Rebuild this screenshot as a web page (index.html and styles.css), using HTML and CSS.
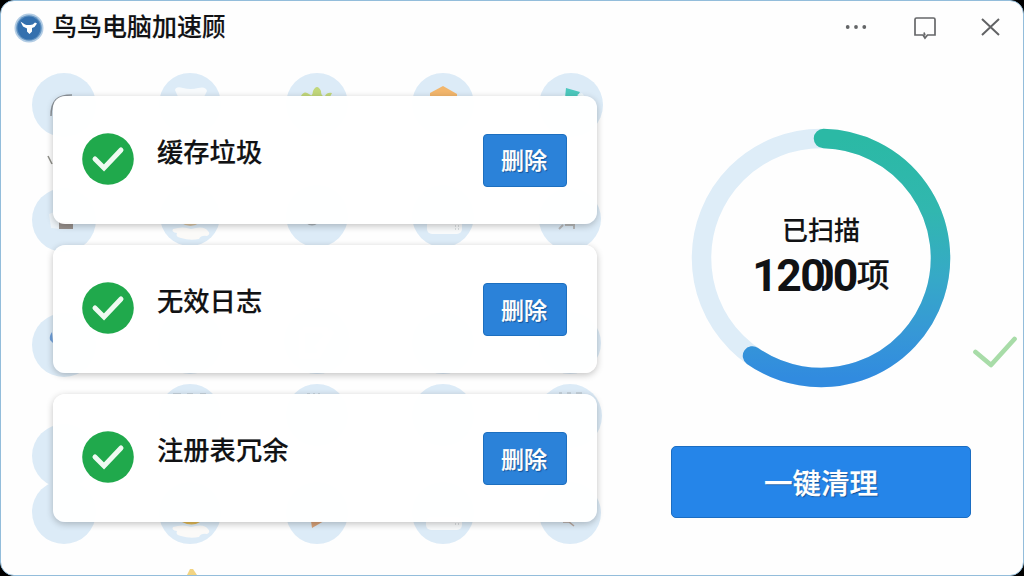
FILE: index.html
```html
<!DOCTYPE html>
<html lang="zh-CN">
<head>
<meta charset="utf-8">
<title>鸟鸟电脑加速顾</title>
<link rel="stylesheet" href="styles.css">
</head>
<body>
<div class="window">
  <svg class="backdrop" width="1022" height="574" viewBox="1 1 1022 574" aria-hidden="true">
    <g fill="#dcebf7">
      <circle cx="64" cy="105" r="32"/><circle cx="190" cy="104" r="31"/><circle cx="317" cy="104" r="31"/><circle cx="443" cy="104" r="31"/><circle cx="571" cy="105" r="32"/>
      <circle cx="64" cy="220" r="32"/><circle cx="190" cy="216" r="30"/><circle cx="317" cy="216" r="31"/><circle cx="443" cy="216" r="31"/><circle cx="570" cy="219" r="31"/>
      <circle cx="64" cy="345" r="32"/><circle cx="190" cy="342" r="32"/><circle cx="317" cy="341" r="33"/><circle cx="443" cy="343" r="31"/><circle cx="570" cy="343" r="31"/>
      <circle cx="64" cy="456" r="32"/><circle cx="190" cy="415" r="31"/><circle cx="317" cy="415" r="31"/><circle cx="443" cy="415" r="31"/><circle cx="570" cy="416" r="32"/>
      <circle cx="64" cy="512" r="32"/><circle cx="190" cy="513" r="31"/><circle cx="317" cy="513" r="31"/><circle cx="443" cy="513" r="31"/><circle cx="570" cy="513" r="31"/>
    </g>
    <path d="M51 116C51 101 57 95 72 95" fill="none" stroke="#8e959b" stroke-width="1.5"/>
    <path d="M48 156l4 8" stroke="#8e8e88" stroke-width="1.5"/>
    <path d="M49 214l11-4v19l-9-1z" fill="#eef4f8"/><path d="M59 222h14v7H59z" fill="#98918d"/>
    <path d="M52 332q-3 4-2 8l3 3z" fill="#6e9fda"/>
    <path d="M175 90q1-4 8-2 8 2 15 0 8-2 9 3l-4 8h-24z" fill="#f7fafc"/>
    <path d="M301 96q3-6 8-2l3 2h-10zm10 0q2-2 2-5 4-8 8 0 0 4 2 5zm14 0q2-4 7-3l-2 4z" fill="#c1d77b"/>
    <path d="M430 96v-3l13-7 14 8v4z" fill="#f2b66c"/>
    <path d="M565 98l1-10 14 4-4 6z" fill="#4cc8bd"/><path d="M558 97l6-2 4 3zm19-2l5-2 3 4z" fill="#eef7fb"/>
    <path d="M173 229q10-3 18 0 13-4 17 2 3 3-1 5-6-1-8 3-9 2-18-1-6-1-4-5-6-1-4-4z" fill="#fbfaf8"/><path d="M181 223h18q-8 6-18 0" fill="#d9c5a5"/>
    <path d="M173 527q10-3 18 0 13-4 17 2 3 3-1 5-6-1-8 3-9 2-18-1-6-1-4-5-6-1-4-4z" fill="#fbfaf8"/><path d="M182 522h18q-8 5-18 0" fill="#e2b957"/>
    <path d="M306 223h12q-6 5-12 0z" fill="#aab4ba"/>
    <rect x="427" y="220" width="35" height="14" rx="5" fill="#f8fafb"/><path d="M455 226h5m-5 3h5" stroke="#b8bec2" stroke-dasharray="1 2"/>
    <rect x="426" y="517" width="36" height="13" rx="5" fill="#f8fafb"/><path d="M455 524h5" stroke="#b8bec2" stroke-dasharray="1 2"/>
    <path d="M559 229l4-4m2 0h9v4" fill="none" stroke="#b7b9ba" stroke-width="2"/>
    <path d="M563 522h6l5 4" fill="none" stroke="#b7a8a0" stroke-width="1.6"/>
    <path d="M311 521h13l-12 7z" fill="#d7a178"/>
    <path d="M173 394h8m6 0h6m7 0h6M307 394h3m3 0h2m3 0h2M559 393h3m5 0h4m5 0h6" stroke="#adb9bf" stroke-width="1.2"/>
    <path d="M187 575l3-6h3l4 6z" fill="#f2d482"/>
    <path d="M303 330h22v5M302 330v26h16l14-25-16 17" fill="none" stroke="#fff" stroke-width="5"/>
  </svg>

  <header class="titlebar">
    <svg class="logo" viewBox="0 0 30 30"><circle cx="15" cy="15" r="14.5" fill="#b2cce4"/><circle cx="15" cy="15" r="12.8" fill="#6293c1"/><circle cx="15" cy="15" r="11.5" fill="#3470ae"/><path d="M6.5 8.500l4.500 3q2 .8 5 .5 3 0 5-2.500l2 1-2.500 3.500-2.500 1v3.500l-2.500 2.500-2.500-2.500v-3l-4-2z" fill="#fff"/></svg>
    <h1 class="title">鸟鸟电脑加速<span class="title-tail">顾</span></h1>
    <nav class="window-controls">
      <svg viewBox="0 0 24 26"><g fill="#636567"><circle cx="3.7" cy="13" r="1.9"/><circle cx="12" cy="13" r="1.9"/><circle cx="20.3" cy="13" r="1.9"/></g></svg>
      <svg viewBox="0 0 24 26"><path d="M3.5 4h17A1.5 1.5 0 0 1 22 5.500V21h-7.500l-2.500 3-2-3H2V5.500A1.500 1.500 0 0 1 3.500 4zM11 18.500l1 3" fill="none" stroke="#666769" stroke-width="1.700"/></svg>
      <svg viewBox="0 0 24 26"><path d="M4 5l17 16M21 5L4 21" fill="none" stroke="#626365" stroke-width="2"/></svg>
    </nav>
  </header>

  <div class="content">
    <main class="card-list">
      <section class="card">
        <svg class="status" viewBox="0 0 52 52"><circle cx="26" cy="26" r="25.8" fill="#20a94c"/><path d="M13 26l9 9L39 17" fill="none" stroke="#effaf2" stroke-width="5" stroke-linecap="round"/></svg>
        <h2>缓存垃圾</h2><button class="delete">删除</button>
      </section>
      <section class="card">
        <svg class="status" viewBox="0 0 52 52"><circle cx="26" cy="26" r="25.8" fill="#20a94c"/><path d="M13 26l9 9L39 17" fill="none" stroke="#effaf2" stroke-width="5" stroke-linecap="round"/></svg>
        <h2>无效日志</h2><button class="delete">删除</button>
      </section>
      <section class="card">
        <svg class="status" viewBox="0 0 52 52"><circle cx="26" cy="26" r="25.8" fill="#20a94c"/><path d="M13 26l9 9L39 17" fill="none" stroke="#effaf2" stroke-width="5" stroke-linecap="round"/></svg>
        <h2>注册表冗余</h2><button class="delete">删除</button>
      </section>
    </main>
    <aside class="scan-panel">
      <div class="gauge">
        <svg class="ring" viewBox="0 0 260 260">
          <defs><linearGradient id="ring-color" x1="0" y1="10" x2="0" y2="250" gradientUnits="userSpaceOnUse"><stop stop-color="#2bb9a5"/><stop offset=".3" stop-color="#31b7af"/><stop offset=".58" stop-color="#36a9c7"/><stop offset=".82" stop-color="#3697d7"/><stop offset="1" stop-color="#318bdf"/></linearGradient></defs>
          <circle cx="130" cy="130" r="119.5" fill="none" stroke="#deedf8" stroke-width="19.5"/>
          <path d="M132.5 10.5A119.5 119.5 0 1 1 61.5 227.900" fill="none" stroke="url(#ring-color)" stroke-width="19.5" stroke-linecap="round"/>
        </svg>
        <div class="readout"><p class="caption">已扫描</p><p class="count"><span class="digits">120<span class="overlap">0</span>0</span><span class="unit">项</span></p></div>
      </div>
      <button class="clean">一键清理</button>
    </aside>
  </div>
  <svg class="ready-check" viewBox="0 0 44 32"><path d="M2.500 16L18 29 41.500 3" fill="none" stroke="#a8dca8" stroke-width="4.700" stroke-linecap="round" stroke-linejoin="round"/></svg>
</div>
</body>
</html>
```
FILE: styles.css
```css
* { box-sizing: border-box; }
body { margin: 0; width: 1024px; height: 576px; overflow: hidden; background: #000; color: #111214; font-family: Roboto, "Noto Sans CJK SC", sans-serif; }
.window { position: relative; width: 1024px; height: 576px; overflow: hidden; background: #fefefe; border: 1px solid #93bddb; border-radius: 14px; }
.backdrop { position: absolute; inset: 0; }
.titlebar { position: relative; display: flex; height: 54px; align-items: center; padding: 0 21px 0 13px; }
.logo { width: 30px; height: 30px; margin-top: -1px; }
.title { margin: 0 0 0 8px; font-size: 25px; font-weight: 500; line-height: 36px; white-space: nowrap; -webkit-text-stroke: .15px currentColor; }
.title-tail { display: inline-block; transform: scaleX(.94); transform-origin: left; }
.window-controls { display: flex; gap: 41.5px; margin: -2px 0 0 auto; }
.window-controls svg { width: 24px; height: 26px; }
.window-controls svg:first-child { margin-right: 3px; }
.content { position: relative; display: flex; padding-left: 52px; }
.card-list { display: flex; flex-direction: column; gap: 21.5px; width: 544px; padding-top: 41px; }
.card { display: flex; align-items: center; height: 127.7px; padding: 0 30px 0 29px; border-radius: 12px; background: rgba(255,255,255,.96); box-shadow: 0 2px 7px rgba(0,0,0,.24); }
.status { width: 52px; height: 52px; margin-top: -2px; }
.card h2 { margin: -14px auto 0 23px; font-size: 26.3px; font-weight: 500; line-height: 36px; -webkit-text-stroke: .15px currentColor; }
.delete, .clean { color: #fff; font-family: inherit; font-weight: 500; text-align: center; text-shadow: 1px 1px 1px rgba(0,50,110,.65); -webkit-text-stroke: .25px #fff; }
.delete { width: 84px; height: 53px; margin-top: 1px; padding: 0 2px 2px 0; border: 1px solid #1d6fbf; border-radius: 4px; background: #2b82d9; font-size: 23px; }
.scan-panel { display: flex; flex-direction: column; align-items: center; width: 300px; margin-left: 74px; padding-top: 73px; }
.gauge { display: grid; width: 260px; height: 260px; }
.ring, .readout { grid-area: 1 / 1; }
.ring { width: 260px; height: 260px; }
.readout { display: flex; flex-direction: column; align-items: center; padding-top: 85px; }
.readout p { margin: 0; white-space: nowrap; }
.caption { font-size: 26px; line-height: 36px; font-weight: 500; -webkit-text-stroke: .1px currentColor; }
.count { display: flex; align-items: center; height: 54px; }
.digits { font-size: 44.5px; font-weight: 700; line-height: 52px; letter-spacing: -1.5px; }
.overlap { display: inline-block; margin: 0 -.5px 0 -15px; clip-path: inset(0 0 0 54%); }
.unit { font-size: 33px; line-height: 44px; font-weight: 500; -webkit-text-stroke: .15px currentColor; }
.clean { width: 300px; height: 72px; margin-top: 58px; padding-bottom: 3px; border: 1px solid #1b6dc2; border-radius: 5px; background: #2585e9; font-size: 28.5px; }
.ready-check { position: absolute; left: 972px; top: 335px; width: 44px; height: 32px; }
```
